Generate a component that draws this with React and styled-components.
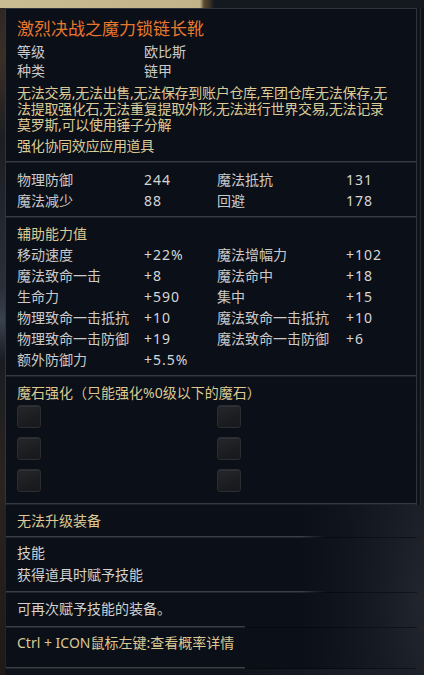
import React from "react";
import styled, { createGlobalStyle } from "styled-components";

const GlobalStyle = createGlobalStyle`
  html, body {
    margin: 0;
    padding: 0;
    background: #0c1017;
    overflow: hidden;
  }
`;

const CJK = `"Noto Sans", "Noto Sans CJK SC", sans-serif`;

const Scene = styled.div`
  width: 424px;
  height: 675px;
  box-sizing: border-box;
  padding: 8px 7px 0 5px;
  overflow: hidden;
  font-family: ${CJK};
  background:
    linear-gradient(to right, #c9bb92 0, #c2b38a 200px, #5b4a32 204px, #3a3226 210px, #141920 214px) top left / 100% 8px no-repeat,
    linear-gradient(#2c2723 0, #3a2f26 60px, #1c1d22 140px, #2a2f3a 290px, #3a4150 320px, #1a1c22 360px, #2a241f 480px, #1e1a18 675px) left top / 5px 100% no-repeat,
    radial-gradient(ellipse 200px 300px at 424px 600px, #20252e 0%, #171b23 55%, #0e1219 100%);
`;

const Panel = styled.div`
  display: flex;
  flex-direction: column;
  width: 412px;
`;

const Upper = styled.div`
  background: #0b0f17;
  border: 1px solid #2e333c;
  border-bottom: none;
  box-shadow: 3px 0 0 #0f131a, 4px 0 0 #262b33;
`;

const Lower = styled.div`
  border-left: 1px solid #1f232b;
  background: linear-gradient(to right, #0b0f17 0, #0b0f17 290px, rgba(11, 15, 23, 0.6) 340px, rgba(11, 15, 23, 0) 411px);
`;

const Section = styled.div`
  padding: ${(p) => p.$pad || "6px 11px 5px"};
`;

const Rule = styled.div`
  height: 2px;
  background: ${(p) =>
    p.$reach
      ? p.$fade
        ? `linear-gradient(to right, #393e47 0, #393e47 ${p.$reach}px, rgba(57,62,71,0) ${p.$reach + 25}px)`
        : `linear-gradient(to right, #393e47 0, #393e47 ${p.$reach}px, transparent ${p.$reach}px)`
      : "#353a43"};
  box-shadow: inset 0 -1px 0 rgba(0, 0, 0, 0.4);
`;

const Title = styled.div`
  color: #e8772f;
  font-size: 17px;
  line-height: 20px;
`;

const Meta = styled.div`
  display: grid;
  grid-template-columns: 127px 1fr;
  margin-top: 3px;
  font-size: 14px;
  line-height: 19px;
  color: #cacaca;
`;

const Desc = styled.div`
  margin-top: 5px;
  font-size: 14px;
  line-height: 16px;
  letter-spacing: -0.3px;
  white-space: nowrap;
  color: #dccb97;
`;

const Head = styled.div`
  font-size: 14px;
  line-height: 20px;
  white-space: nowrap;
  color: ${(p) => p.$color || "#dcc993"};
`;

const Stats = styled.div`
  display: grid;
  grid-template-columns: 127px 73px 129px 1fr;
  font-size: 14px;
  line-height: 21px;
  white-space: nowrap;
  color: #cacaca;
`;

const Value = styled.span`
  color: #d6d6d6;
  letter-spacing: 1px;
`;

const Sockets = styled.div`
  display: grid;
  grid-template-columns: 200px 1fr;
  row-gap: 9px;
  margin-top: 2px;
`;

const Socket = styled.div`
  width: 24px;
  height: 23px;
  box-sizing: border-box;
  border-radius: 3px;
  border: 1px solid #2b2d31;
  background: linear-gradient(160deg, #25272b 0%, #1b1d20 60%, #17181b 100%);
  box-shadow: inset 0 1px 0 rgba(255, 255, 255, 0.05);
`;

const Line = styled.div`
  font-size: 14px;
  line-height: ${(p) => p.$lh || 20}px;
  color: ${(p) => p.$color || "#d2d2d2"};
`;

const basics = [
  ["物理防御", "244", "魔法抵抗", "131"],
  ["魔法减少", "88", "回避", "178"],
];

const bonuses = [
  ["移动速度", "+22%", "魔法增幅力", "+102"],
  ["魔法致命一击", "+8", "魔法命中", "+18"],
  ["生命力", "+590", "集中", "+15"],
  ["物理致命一击抵抗", "+10", "魔法致命一击抵抗", "+10"],
  ["物理致命一击防御", "+19", "魔法致命一击防御", "+6"],
  ["额外防御力", "+5.5%", "", ""],
];

const StatGrid = ({ rows }) => (
  <Stats>
    {rows.map((r, i) => (
      <React.Fragment key={i}>
        <span>{r[0]}</span>
        <Value>{r[1]}</Value>
        <span>{r[2]}</span>
        <Value>{r[3]}</Value>
      </React.Fragment>
    ))}
  </Stats>
);

export default function App() {
  return (
    <>
      <GlobalStyle />
      <Scene>
        <Panel>
          <Upper>
            <Section $pad="10px 11px 7px">
              <Title>激烈决战之魔力锁链长靴</Title>
              <Meta>
                <span>等级</span>
                <span>欧比斯</span>
                <span>种类</span>
                <span>链甲</span>
              </Meta>
              <Desc>
                无法交易,无法出售,无法保存到账户仓库,军团仓库无法保存,无
                <br />
                法提取强化石,无法重复提取外形,无法进行世界交易,无法记录
                <br />
                莫罗斯,可以使用锤子分解
              </Desc>
              <Desc>强化协同效应应用道具</Desc>
            </Section>
            <Rule />
            <Section $pad="6px 11px 5px">
              <StatGrid rows={basics} />
            </Section>
            <Rule />
            <Section $pad="6px 11px 5px">
              <Head>辅助能力值</Head>
              <StatGrid rows={bonuses} />
            </Section>
            <Rule />
            <Section $pad="6px 11px 11px">
              <Head>魔石强化（只能强化%0级以下的魔石）</Head>
              <Sockets>
                {Array.from({ length: 6 }).map((_, i) => (
                  <Socket key={i} />
                ))}
              </Sockets>
            </Section>
            <Rule />
          </Upper>
          <Lower>
            <Section $pad="6px 11px 5px">
              <Head>无法升级装备</Head>
            </Section>
            <Rule $reach={295} $fade />
            <Section $pad="4px 11px 5px">
              <Line $lh={22}>技能</Line>
              <Line $lh={22}>获得道具时赋予技能</Line>
            </Section>
            <Rule $reach={295} $fade />
            <Section $pad="6px 11px 7px">
              <Line>可再次赋予技能的装备。</Line>
            </Section>
            <Rule $reach={239} />
            <Section $pad="5px 11px 14px">
              <Head>Ctrl + ICON鼠标左键:查看概率详情</Head>
            </Section>
            <Rule $reach={239} />
          </Lower>
        </Panel>
      </Scene>
    </>
  );
}
